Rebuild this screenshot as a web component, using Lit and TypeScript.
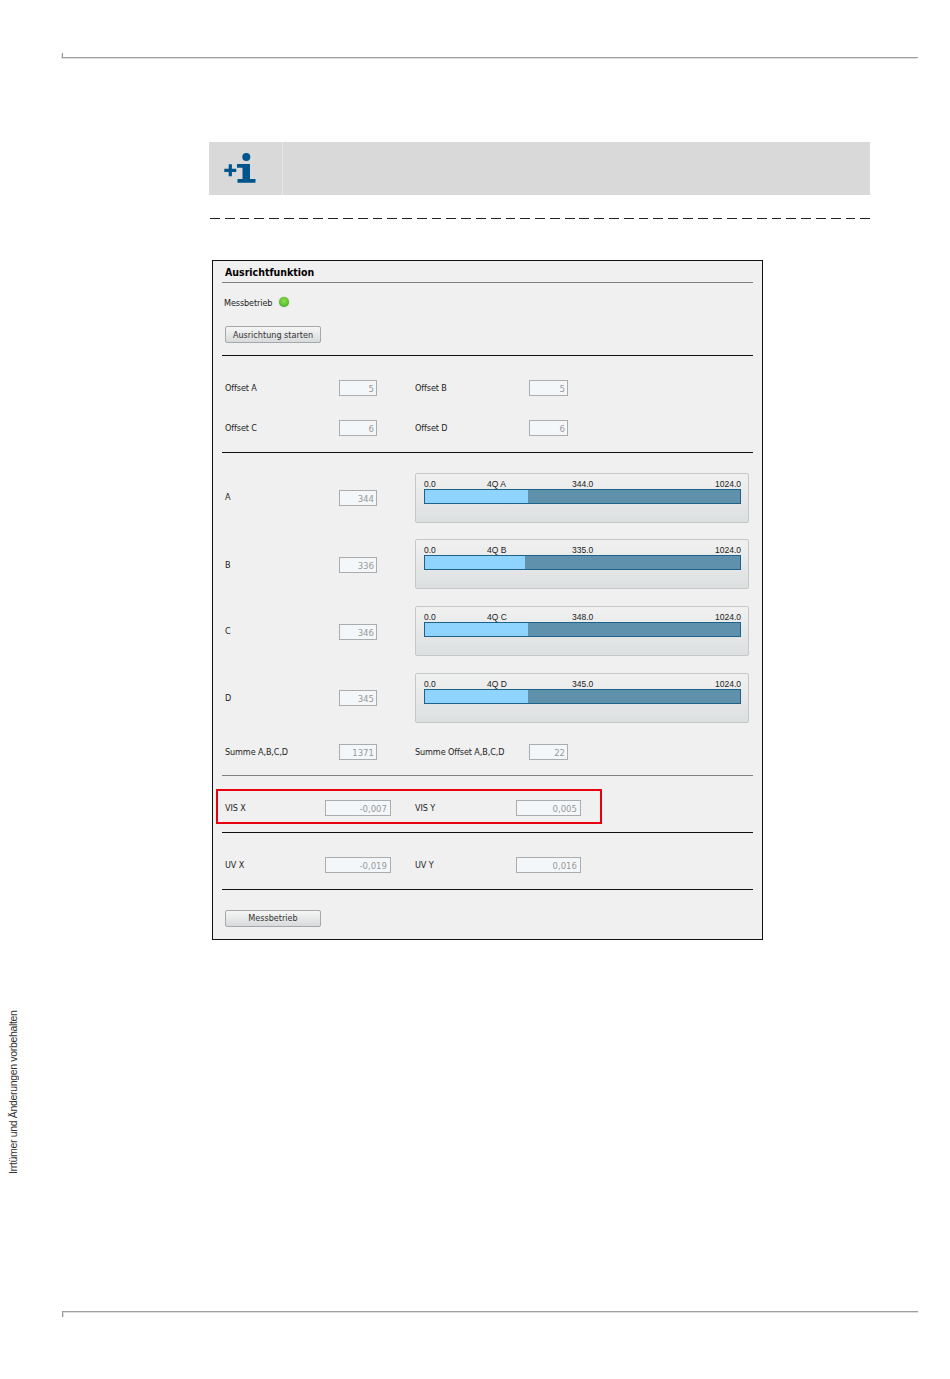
import { LitElement, html, css } from "lit";
import { customElement } from "lit/decorators.js";

const gauges = [
  { name: "A", field: "344", title: "4Q A", value: "344.0", fill: 103, labelShift: -2, fieldShift: 0 },
  { name: "B", field: "336", title: "4Q B", value: "335.0", fill: 100, labelShift: 2, fieldShift: 2 },
  { name: "C", field: "346", title: "4Q C", value: "348.0", fill: 103, labelShift: 0, fieldShift: 2 },
  { name: "D", field: "345", title: "4Q D", value: "345.0", fill: 103, labelShift: 0, fieldShift: 0 },
];

@customElement("app-root")
export class AppRoot extends LitElement {
  static styles = css`
    :host { display: block; background: #fff; font-family: "DejaVu Sans Condensed", "DejaVu Sans", sans-serif; }
    * { box-sizing: border-box; }
    .page { display: grid; grid-template-columns: 62px 856px; height: 1379px; overflow: hidden; }
    .side { padding: 1010px 0 0 7px; }
    .side span {
      display: block; writing-mode: vertical-rl; transform: rotate(180deg);
      font-family: "Liberation Sans", Arial, sans-serif;
      font-size: 10.5px; line-height: 12px; height: 164px; color: #333; white-space: nowrap; letter-spacing: -0.33px;
    }
    .main { display: flex; flex-direction: column; }
    .rule-top { margin-top: 53px; height: 5px; border-left: 1px solid #999; border-bottom: 1px solid #a0a0a0; box-shadow: -1px 1px 0 #ddd; }
    .rule-bottom { height: 6px; border-left: 1px solid #999; border-top: 1px solid #a0a0a0; box-shadow: inset 1px 1px 0 #ddd; }
    .banner { margin: 84px 0 0 147px; width: 661px; height: 53px; background: #d9d9d9; display: flex; }
    .banner .icon { width: 74px; height: 53px; border-right: 1px solid #e6e6e6; }
    .banner svg { display: block; }
    .dash {
      margin: 23px 0 0 148px; width: 660px; height: 1px;
      background: repeating-linear-gradient(90deg, #222 0 9.8px, transparent 9.8px 14.78px);
    }
    .panel {
      margin: 41px 0 0 150px; width: 551px; height: 680px; border: 1px solid #111; background: #f0f0f0;
      display: flex; flex-direction: column; font-size: 9px; color: #222; letter-spacing: -0.1px;
    }
    .title { height: 21px; line-height: 23px; padding-left: 12px; font-size: 10.5px; font-weight: 700; color: #000; letter-spacing: 0; }
    hr { margin: 0 9px; border: 0; height: 1px; background: #111; flex: none; }
    hr.grey { background: #808080; }
    .status { height: 38px; padding-left: 11px; display: flex; align-items: center; gap: 7px; }
    .status .text { padding-top: 1px; }
    .led {
      width: 10px; height: 10px; border-radius: 50%;
      background: radial-gradient(circle at 50% 40%, #8be04e 0, #5fc02e 55%, #3c8f2a 100%);
      box-shadow: 0 0 1px #777;
    }
    button {
      width: 96px; height: 17px; padding: 0; margin-left: 12px; font: inherit; color: #333; letter-spacing: 0;
      border: 1px solid #a4a8aa; border-radius: 2px; background: linear-gradient(#f6f6f6, #d8dadb); display: block;
    }
    button.up { padding-bottom: 2px; }
    .row { display: grid; align-items: center; height: 16px; margin-left: 12px; position: relative; }
    .small { grid-template-columns: 114px 38px 38px 114px 39px; }
    .wide { grid-template-columns: 100px 66px 24px 101px 65px; }
    .label { white-space: nowrap; }
    .field {
      width: 100%; height: 16px; border: 1px solid #acacac; background: #f4f7f9; color: #999;
      font: 9.5px "DejaVu Sans Condensed", "DejaVu Sans", sans-serif; text-align: right; padding: 0 2px; outline: none; letter-spacing: 0;
    }
    .wide .field { padding-right: 3px; }
    .gauge-row { display: grid; grid-template-columns: 114px 38px 38px 334px; align-items: center; margin-left: 12px; height: 50px; }
    .gauge {
      height: 50px; border: 1px solid #c6c8c8; border-radius: 2px; background: linear-gradient(#f1f1f1, #dcdfe0);
      padding: 5px 7px 0 8px; display: flex; flex-direction: column;
    }
    .scale {
      display: grid; grid-template-columns: 63px 85px 1fr auto; font-family: "Liberation Sans", Arial, sans-serif;
      font-size: 8.5px; line-height: 10px; color: #222; height: 10px; letter-spacing: 0;
    }
    .track { height: 15px; border: 1px solid #1f6289; background: #5f90ac; }
    .fill { height: 100%; background: #8ed4ff; }
    .red { position: absolute; left: -9px; top: -11px; width: 386px; height: 35px; border: 2px solid #e8000f; pointer-events: none; }
  `;

  small(a: string, av: string, b: string, bv: string, top: number) {
    return html`<div class="row small" style="margin-top:${top}px">
      <div class="label">${a}</div><input class="field" readonly .value=${av} /><div></div>
      <div class="label">${b}</div><input class="field" readonly .value=${bv} />
    </div>`;
  }

  wide(a: string, av: string, b: string, bv: string, red = false) {
    return html`<div class="row wide" style="margin-top:24px">
      <div class="label">${a}</div><input class="field" readonly .value=${av} /><div></div>
      <div class="label">${b}</div><input class="field" readonly .value=${bv} />
      ${red ? html`<div class="red"></div>` : ""}
    </div>`;
  }

  render() {
    return html`<div class="page">
      <div class="side"><span>Irrtümer und Änderungen vorbehalten</span></div>
      <div class="main">
        <div class="rule-top"></div>
        <div class="banner">
          <div class="icon">
            <svg width="73" height="53" viewBox="0 0 73 53" fill="#00558c">
              <circle cx="37.3" cy="15" r="4" />
              <path d="M28 22h13v15h5.5v3.8H28.5V37h5V25.8H28z" />
              <path d="M19.7 22.3h3.2v4.4h4.4v3.2h-4.4v4.4h-3.2v-4.4h-4.4v-3.2h4.4z" />
            </svg>
          </div>
        </div>
        <div class="dash"></div>
        <div class="panel">
          <div class="title">Ausrichtfunktion</div>
          <hr class="grey" />
          <div class="status"><span class="text">Messbetrieb</span><span class="led"></span></div>
          <button style="margin-top:5px">Ausrichtung starten</button>
          <hr style="margin-top:12px" />
          ${this.small("Offset A", "5", "Offset B", "5", 24)}
          ${this.small("Offset C", "6", "Offset D", "6", 24)}
          <hr style="margin-top:16px" />
          ${gauges.map(
            (g, i) => html`<div class="gauge-row" style="margin-top:${i === 0 ? 20 : i === 1 ? 16 : 17}px">
              <div class="label" style="margin-top:${g.labelShift}px">${g.name}</div>
              <input class="field" style="margin-top:${g.fieldShift}px" readonly .value=${g.field} />
              <div></div>
              <div class="gauge">
                <div class="scale"><span>0.0</span><span>${g.title}</span><span>${g.value}</span><span>1024.0</span></div>
                <div class="track"><div class="fill" style="width:${g.fill}px"></div></div>
              </div>
            </div>`
          )}
          ${this.small("Summe A,B,C,D", "1371", "Summe Offset A,B,C,D", "22", 21)}
          <hr class="grey" style="margin-top:15px" />
          ${this.wide("VIS X", "-0,007", "VIS Y", "0,005", true)}
          <hr style="margin-top:16px" />
          ${this.wide("UV X", "-0,019", "UV Y", "0,016")}
          <hr style="margin-top:16px" />
          <button class="up" style="margin-top:20px">Messbetrieb</button>
        </div>
        <div class="rule-bottom" style="margin-top:371px"></div>
      </div>
    </div>`;
  }
}
